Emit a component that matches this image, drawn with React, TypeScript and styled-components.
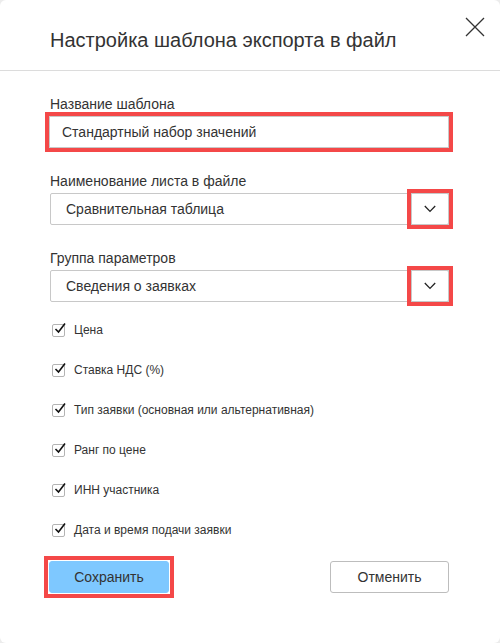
import React from "react";
import styled, { createGlobalStyle } from "styled-components";

const GlobalStyle = createGlobalStyle`
  html, body {
    margin: 0;
    padding: 0;
    background: #ececec;
    font-family: "Liberation Sans", Arial, sans-serif;
    color: #333;
  }
`;

const Dialog = styled.div`
  width: 500px;
  height: 643px;
  background: #fff;
  border-radius: 6px;
  box-sizing: border-box;
  display: flex;
  flex-direction: column;
  position: relative;
`;

const Header = styled.div`
  height: 71px;
  border-bottom: 1px solid #dcdcdc;
  box-sizing: border-box;
  padding: 28px 0 0 50px;
`;

const Title = styled.h1`
  margin: 0;
  font-size: 20px;
  font-weight: normal;
  color: #333;
  line-height: 24px;
`;

const CloseButton = styled.button`
  position: absolute;
  top: 16px;
  right: 14px;
  width: 22px;
  height: 22px;
  padding: 0;
  border: none;
  background: transparent;
  cursor: pointer;
`;

const Body = styled.div`
  padding: 25px 51px 0 50px;
  display: flex;
  flex-direction: column;
`;

const Fields = styled.div`
  display: flex;
  flex-direction: column;
  gap: 25px;
`;

const Field = styled.div`
  display: flex;
  flex-direction: column;
`;

const Label = styled.label`
  font-size: 14px;
  color: #333;
  line-height: 16px;
  margin-bottom: 4px;
`;

// red annotation frame drawn over the screenshot
const Highlight = styled.div<{ $pad?: number }>`
  margin-left: -1px;
  padding: ${p => p.$pad ?? 0}px;
  background: #fff;
  outline: 4px solid #f44848;
`;

const TextInput = styled.input`
  display: block;
  box-sizing: border-box;
  width: 100%;
  height: 32px;
  border: 1px solid #c8c8c8;
  padding: 0 12px;
  font-family: inherit;
  font-size: 14px;
  color: #333;
  outline: none;
`;

const SelectBox = styled.div`
  display: flex;
  align-items: stretch;
  height: 32px;
  box-sizing: border-box;
  border: 1px solid #c8c8c8;
  border-radius: 2px;
`;

const SelectValue = styled.div`
  flex: 1;
  display: flex;
  align-items: center;
  padding-left: 15px;
  font-size: 14px;
  color: #333;
`;

const ArrowButton = styled.div`
  width: 36px;
  display: flex;
  align-items: center;
  justify-content: center;
  border: 1px solid #c8c8c8;
  margin: -1px -1px -1px 0;
  outline: 4px solid #f44848;
`;

const CheckList = styled.div`
  display: flex;
  flex-direction: column;
  gap: 24px;
  padding-left: 2px;
  margin-top: 20px;
`;

const CheckRow = styled.label`
  display: flex;
  align-items: center;
  gap: 9px;
  font-size: 12px;
  color: #333;
  line-height: 16px;
`;

const CheckBox = styled.span`
  width: 13px;
  height: 13px;
  box-sizing: border-box;
  border: 1px solid #b4b4b4;
  border-radius: 2px;
  position: relative;
`;

const CheckMark = styled.svg`
  position: absolute;
  left: 1px;
  top: -3px;
`;

const Footer = styled.div`
  display: flex;
  justify-content: space-between;
  align-items: center;
  padding: 22px 51px 0 49px;
`;

const Button = styled.button<{ $primary?: boolean }>`
  display: block;
  height: 32px;
  width: ${p => (p.$primary ? "120px" : "119px")};
  font-family: inherit;
  font-size: 14px;
  color: #333;
  border-radius: 3px;
  cursor: pointer;
  border: 1px solid ${p => (p.$primary ? "#7ec8ff" : "#bdbdbd")};
  background: ${p => (p.$primary ? "#7ec8ff" : "#fff")};
`;

const Chevron = () => (
  <svg width="12" height="8" viewBox="0 0 12 8">
    <path d="M0.8 1 L6 6.4 L11.2 1" fill="none" stroke="#222" strokeWidth="1.3" />
  </svg>
);

const items = [
  "Цена",
  "Ставка НДС (%)",
  "Тип заявки (основная или альтернативная)",
  "Ранг по цене",
  "ИНН участника",
  "Дата и время подачи заявки",
];

export default function App() {
  return (
    <>
      <GlobalStyle />
      <Dialog>
        <Header>
          <Title>Настройка шаблона экспорта в файл</Title>
        </Header>
        <CloseButton aria-label="Закрыть">
          <svg width="22" height="22" viewBox="0 0 22 22">
            <path d="M2 2 L20 20 M20 2 L2 20" stroke="#333" strokeWidth="1.3" />
          </svg>
        </CloseButton>
        <Body>
          <Fields>
            <Field>
              <Label>Название шаблона</Label>
              <Highlight>
                <TextInput defaultValue="Стандартный набор значений" />
              </Highlight>
            </Field>
            <Field>
              <Label>Наименование листа в файле</Label>
              <SelectBox>
                <SelectValue>Сравнительная таблица</SelectValue>
                <ArrowButton>
                  <Chevron />
                </ArrowButton>
              </SelectBox>
            </Field>
            <Field>
              <Label>Группа параметров</Label>
              <SelectBox>
                <SelectValue>Сведения о заявках</SelectValue>
                <ArrowButton>
                  <Chevron />
                </ArrowButton>
              </SelectBox>
            </Field>
          </Fields>
          <CheckList>
            {items.map(text => (
              <CheckRow key={text}>
                <CheckBox>
                  <CheckMark width="13" height="13" viewBox="0 0 13 13">
                    <path d="M1.5 7 L4.5 10 L11 1.5" fill="none" stroke="#111" strokeWidth="1.6" />
                  </CheckMark>
                </CheckBox>
                {text}
              </CheckRow>
            ))}
          </CheckList>
        </Body>
        <Footer>
          <Highlight $pad={1}>
            <Button $primary>Сохранить</Button>
          </Highlight>
          <Button>Отменить</Button>
        </Footer>
      </Dialog>
    </>
  );
}
